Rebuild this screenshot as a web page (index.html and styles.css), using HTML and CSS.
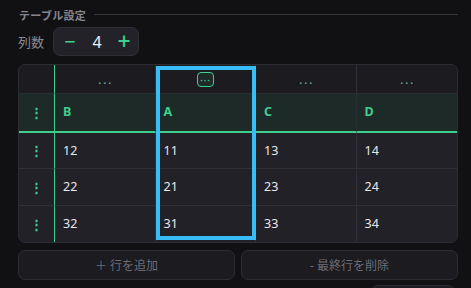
FILE: index.html
```html
<!DOCTYPE html>
<html lang="ja">
<head>
<meta charset="utf-8">
<title>テーブル設定</title>
<link rel="stylesheet" href="styles.css">
</head>
<body>
<div class="page">
  <div class="section-title"><span class="title-text">テーブル設定</span><div class="rule"></div></div>
  <div class="stepper-row">
    <span class="label">列数</span>
    <div class="stepper">
      <span class="step">−</span>
      <span class="val">4</span>
      <span class="step plus">+</span>
    </div>
  </div>
  <div class="grid-wrap">
    <div class="grid">
      <div class="cell h1 rn"></div>
      <div class="cell h1"><span class="dots">···</span></div>
      <div class="cell h1"><span class="dots-box">···</span></div>
      <div class="cell h1"><span class="dots">···</span></div>
      <div class="cell h1 last"><span class="dots">···</span></div>

      <div class="cell h2 rn"><span class="handle">⋮</span></div>
      <div class="cell h2 col">B</div>
      <div class="cell h2 col">A</div>
      <div class="cell h2 col">C</div>
      <div class="cell h2 col last">D</div>

      <div class="cell rn"><span class="handle">⋮</span></div>
      <div class="cell">12</div>
      <div class="cell">11</div>
      <div class="cell">13</div>
      <div class="cell last">14</div>

      <div class="cell rn"><span class="handle">⋮</span></div>
      <div class="cell">22</div>
      <div class="cell">21</div>
      <div class="cell">23</div>
      <div class="cell last">24</div>

      <div class="cell rn bottom"><span class="handle">⋮</span></div>
      <div class="cell bottom">32</div>
      <div class="cell bottom">31</div>
      <div class="cell bottom">33</div>
      <div class="cell bottom last">34</div>
    </div>
    <div class="sel-col"></div>
  </div>
  <div class="actions">
    <div class="btn">＋ 行を追加</div>
    <div class="btn">- 最終行を削除</div>
  </div>
  <div class="more-row"><div class="more"></div></div>
</div>
</body>
</html>
```

FILE: styles.css
```css
html, body {
  margin: 0;
  padding: 0;
  background: #111114;
  overflow: hidden;
}
body {
  font-family: "Noto Sans", "Noto Sans CJK JP", sans-serif;
  color: #e6e6ea;
}
.page {
  width: 440px;
  height: 288px;
  overflow: hidden;
  padding: 7px 0 0 18px;
  box-sizing: content-box;
}
.section-title {
  display: flex;
  align-items: center;
  gap: 8px;
  height: 15px;
}
.title-text {
  font-size: 11px;
  font-weight: 600;
  color: #85858f;
  padding-left: 1px;
  letter-spacing: 0.3px;
}
.rule {
  flex: 1;
  height: 1px;
  background: #34343b;
}
.stepper-row {
  display: flex;
  align-items: center;
  gap: 9px;
  margin-top: 5px;
}
.label {
  font-size: 13px;
  color: #8a8a94;
}
.stepper {
  display: flex;
  align-items: center;
  justify-content: space-between;
  height: 29px;
  padding: 0 7px 0 9px;
  box-sizing: border-box;
  width: 86px;
  background: #222228;
  border: 1px solid #2e2e35;
  border-radius: 7px;
}
.step {
  color: #3ecf8e;
  font-size: 20px;
  line-height: 1;
  width: 14px;
  text-align: center;
}
.plus {
  font-size: 23px;
  font-weight: 500;
}
.val {
  font-size: 16px;
  color: #f0f0f2;
}
.grid-wrap {
  position: relative;
  margin-top: 8px;
  width: 438px;
  border: 1px solid #2c2c33;
  border-radius: 7px;
  overflow: hidden;
  background: #222127;
}
.grid {
  display: grid;
  grid-template-columns: 36px repeat(4, 1fr);
  grid-template-rows: 29px 39px 36px 37px 36px;
}
.cell {
  border-right: 1px solid #2f2f36;
  border-bottom: 1px solid #2f2f36;
  font-size: 12.5px;
  color: #e8e8ec;
  padding: 9px 0 0 8px;
  box-sizing: border-box;
  background: #222127;
}
.cell.last {
  border-right: none;
}
.cell.bottom {
  border-bottom: none;
}
.cell.rn {
  border-right: 1px solid #3ecf8e;
  padding: 0;
  display: flex;
  align-items: center;
  justify-content: center;
}
.cell.h1 {
  background: #1b1b20;
  padding: 0;
  display: flex;
  align-items: center;
  justify-content: center;
  border-bottom-color: #2c2c33;
}
.cell.h1.rn {
  border-right-color: #3ecf8e;
}
.cell.h2 {
  background: #1e2a28;
  border-bottom: 2px solid #3ecf8e;
}
.cell.col {
  color: #3ecf8e;
  font-weight: 700;
  font-size: 12.5px;
  padding-top: 9px;
  border-right-color: #26312f;
}
.dots {
  color: #6fa896;
  font-size: 13px;
  letter-spacing: 1.5px;
  line-height: 1;
  margin-top: 8px;
  padding-left: 1.5px;
}
.dots-box {
  display: flex;
  align-items: center;
  justify-content: center;
  width: 17px;
  height: 15px;
  box-sizing: border-box;
  border: 1px solid #3ecf8e;
  border-radius: 4px;
  background: #1e2a28;
  color: #3ecf8e;
  font-size: 11px;
  letter-spacing: 0.5px;
  line-height: 1;
  margin-top: 0;
}
.handle {
  color: #3ecf8e;
  font-size: 13px;
  line-height: 1;
  font-weight: 700;
}
.sel-col {
  position: absolute;
  top: 1px;
  left: 137px;
  width: 100px;
  height: 174px;
  border: 4px solid #38bdf8;
  box-sizing: border-box;
  pointer-events: none;
}
.actions {
  display: grid;
  grid-template-columns: 1fr 1fr;
  gap: 6px;
  margin-top: 7px;
  width: 440px;
}
.btn {
  height: 30px;
  box-sizing: border-box;
  border: 1px solid #2c2c33;
  border-radius: 7px;
  background: #1b1b20;
  color: #6c6c77;
  font-size: 12px;
  display: flex;
  align-items: center;
  justify-content: center;
}
.more-row {
  display: flex;
  justify-content: flex-end;
  width: 437px;
  margin-top: 5px;
}
.more {
  width: 82px;
  height: 30px;
  border: 1px solid #2c2c33;
  border-radius: 7px;
  background: #1b1b20;
}
```
